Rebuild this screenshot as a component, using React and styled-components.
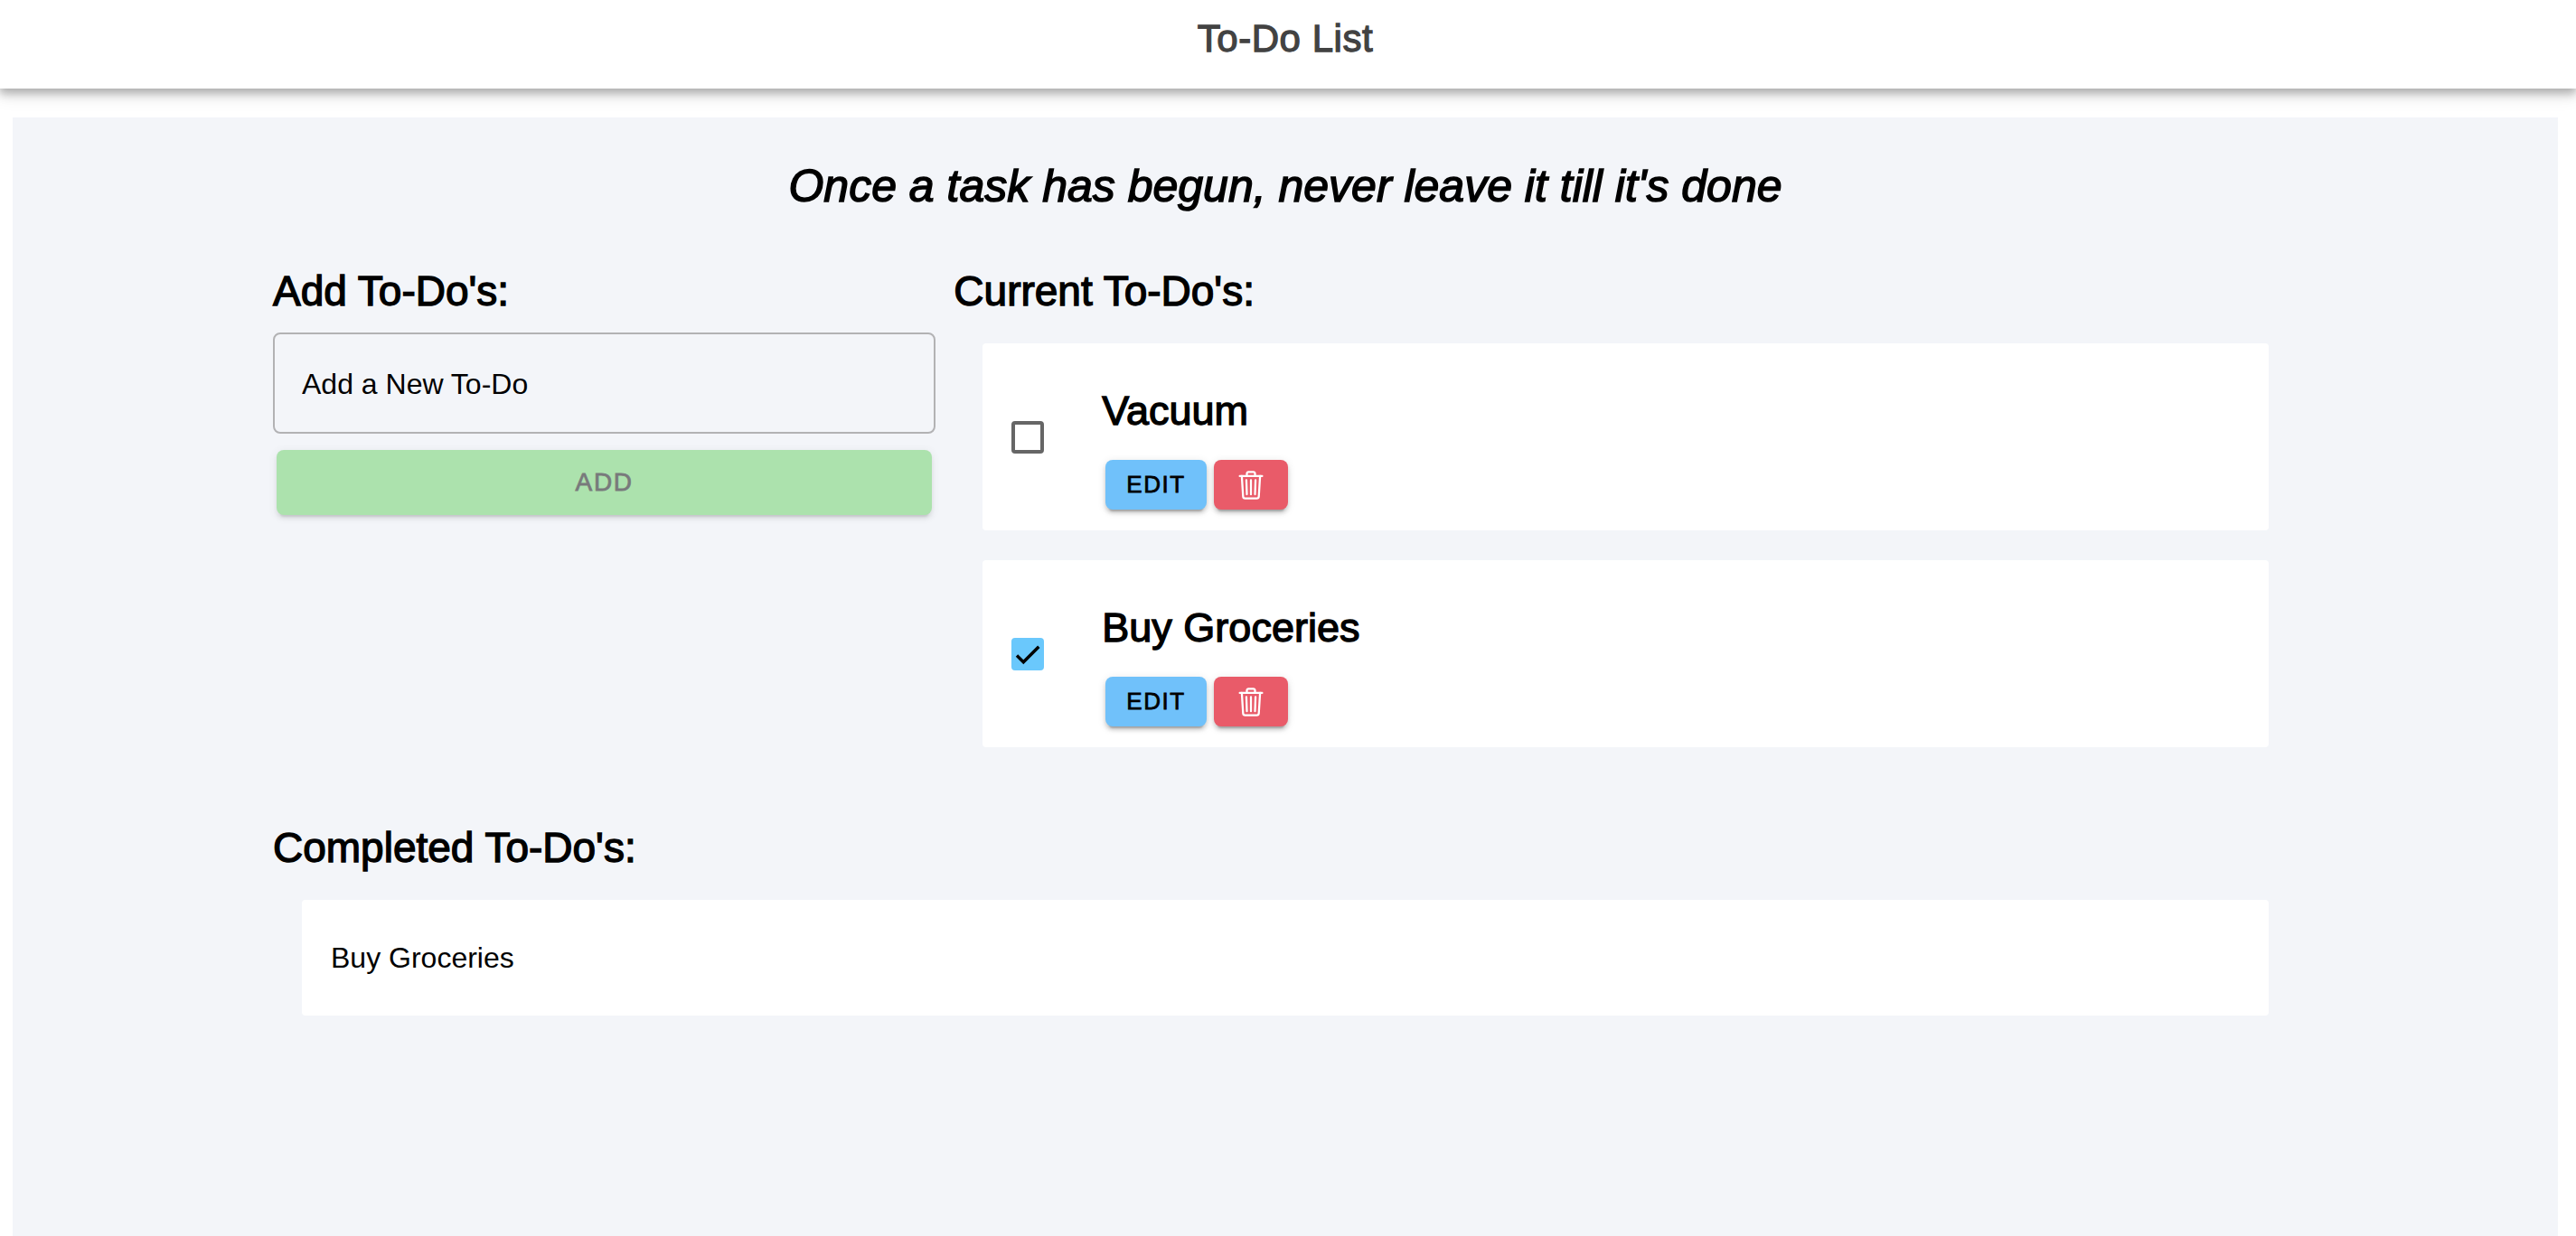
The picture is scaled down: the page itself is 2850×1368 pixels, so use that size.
import React, { useState } from "react";
import styled, { createGlobalStyle, css } from "styled-components";

const GlobalStyle = createGlobalStyle`
  *, *::before, *::after { box-sizing: border-box; }
  body {
    margin: 0;
    background: #fff;
    color: #000;
    font-family: "Liberation Sans", Arial, sans-serif;
    font-size: 32px;
  }
  h1, h2, h3, p, ul { margin: 0; padding: 0; font-weight: 400; }
  ul { list-style: none; }
`;

/* A medium weight, between the family's regular and bold. */
const mediumWeight = css`
  -webkit-text-stroke: 0.03em currentColor;
`;

const Page = styled.div`
  min-height: 100vh;
  display: flex;
  flex-direction: column;
  overflow-x: hidden;
`;

const Header = styled.header`
  height: 98px;
  padding-bottom: 12px;
  display: flex;
  align-items: center;
  justify-content: center;
  background: #fff;
  box-shadow: 0 4px 8px 0 rgba(0, 0, 0, 0.16), 0 8px 10px 0 rgba(0, 0, 0, 0.12),
    0 2px 20px 4px rgba(0, 0, 0, 0.1);
`;

const AppTitle = styled.h1`
  padding-right: 6px;
  font-size: 42px;
  line-height: 48px;
  letter-spacing: 0.0125em;
  color: #424242;
  ${mediumWeight}
`;

const Panel = styled.main`
  flex: 1;
  margin: 32px 20px 0 14px;
  padding-top: 48px;
  background: #f3f5f9;
`;

const Motto = styled.p`
  font-size: 50px;
  line-height: 56px;
  font-style: italic;
  text-align: center;
  ${mediumWeight}
`;

const Board = styled.div`
  width: 80vw;
  margin: 34px auto 0;
  padding: 0 10px;
  display: grid;
  grid-template-columns: minmax(0, 1fr) minmax(0, 2fr);
  row-gap: 57px;
`;

const Section = styled.section`
  grid-column: ${(p) => (p.$wide ? "1 / -1" : "auto")};
  padding: 0 10px;
`;

const Heading = styled.h2`
  padding: 28px 0 20px;
  font-size: 46px;
  line-height: 52px;
  ${mediumWeight}
`;

const TodoForm = styled.form`
  display: flex;
  flex-direction: column;
`;

const TextField = styled.input`
  width: 100%;
  height: 112px;
  padding: 2px 30px 0;
  border: 2px solid #b2b2b4;
  border-radius: 8px;
  background: transparent;
  color: #000;
  font: inherit;
  &::placeholder { color: #000; opacity: 1; }
`;

const tones = { add: "#68d064", edit: "#70c1fa", remove: "#e95b69" };

const Button = styled.button`
  height: ${(p) => (p.$small ? 55 : 72)}px;
  padding: 0 23px;
  display: inline-flex;
  align-items: center;
  justify-content: center;
  border: 0;
  border-radius: 8px;
  background: ${(p) => tones[p.$tone]};
  color: #000;
  font-family: inherit;
  font-size: ${(p) => (p.$small ? 26 : 28)}px;
  letter-spacing: 0.06em;
  ${mediumWeight}
  box-shadow: 0 6px 2px -4px rgba(0, 0, 0, 0.2), 0 4px 4px 0 rgba(0, 0, 0, 0.14),
    0 2px 10px 0 rgba(0, 0, 0, 0.12);
  &:disabled { opacity: 0.5; }
`;

const AddButton = styled(Button)`
  margin: 18px 4px 0;
`;

const CardList = styled.ul`
  display: flex;
  flex-direction: column;
  gap: 33px;
  padding: 12px 32px 0;
`;

const Card = styled.li`
  display: flex;
  align-items: center;
  gap: 64px;
  padding: 49px 32px 23px;
  border-radius: 4px;
  background: #fff;
`;

const DoneCard = styled.li`
  padding: 44px 32px;
  border-radius: 4px;
  background: #fff;
  line-height: 40px;
`;

const CheckLabel = styled.label`
  display: grid;
  margin-top: -25px;
`;

const Checkbox = styled.input`
  grid-area: 1 / 1;
  appearance: none;
  width: 36px;
  height: 36px;
  margin: 0;
  border: 4px solid #666;
  border-radius: 4px;
  background: #fff;
  &:checked { border-color: #6ac8fc; background: #6ac8fc; }
`;

const CheckMark = styled.svg`
  grid-area: 1 / 1;
  width: 36px;
  height: 36px;
  pointer-events: none;
`;

const CardTitle = styled.h3`
  font-size: 45px;
  line-height: 52px;
  ${mediumWeight}
`;

const Actions = styled.div`
  display: flex;
  gap: 8px;
  padding: 28px 4px 0;
`;

const TrashSvg = styled.svg`
  width: 36px;
  height: 36px;
  fill: none;
  stroke: #fff;
  stroke-width: 32px;
  stroke-linecap: round;
  stroke-linejoin: round;
`;

function TrashIcon() {
  return (
    <TrashSvg viewBox="0 0 512 512" aria-hidden="true">
      <path d="M112 112l20 320c.95 18.49 14.4 32 32 32h184c17.67 0 30.87-13.51 32-32l20-320" />
      <path d="M80 112h352" />
      <path d="M192 112V72a23.93 23.93 0 0124-24h80a23.93 23.93 0 0124 24v40M256 176v224M184 176l8 224M328 176l-8 224" />
    </TrashSvg>
  );
}

function TodoCard({ todo, onToggle, onRemove }) {
  return (
    <Card>
      <CheckLabel>
        <Checkbox
          type="checkbox"
          aria-label={todo.title}
          checked={todo.done}
          onChange={() => onToggle(todo.id)}
        />
        {todo.done && (
          <CheckMark viewBox="0 0 36 36" aria-hidden="true">
            <path d="M6 19.5l7.3 7.3L30.3 9.8" fill="none" stroke="#000" strokeWidth="3.4" />
          </CheckMark>
        )}
      </CheckLabel>
      <div>
        <CardTitle>{todo.title}</CardTitle>
        <Actions>
          <Button type="button" $tone="edit" $small>EDIT</Button>
          <Button
            type="button"
            $tone="remove"
            $small
            aria-label="Delete"
            onClick={() => onRemove(todo.id)}
          >
            <TrashIcon />
          </Button>
        </Actions>
      </div>
    </Card>
  );
}

export default function App() {
  const [draft, setDraft] = useState("");
  const [todos, setTodos] = useState([
    { id: 1, title: "Vacuum", done: false },
    { id: 2, title: "Buy Groceries", done: true },
  ]);

  const addTodo = (event) => {
    event.preventDefault();
    setTodos([...todos, { id: Date.now(), title: draft, done: false }]);
    setDraft("");
  };
  const toggle = (id) =>
    setTodos(todos.map((t) => (t.id === id ? { ...t, done: !t.done } : t)));
  const remove = (id) => setTodos(todos.filter((t) => t.id !== id));

  return (
    <Page>
      <GlobalStyle />
      <Header>
        <AppTitle>To-Do List</AppTitle>
      </Header>
      <Panel>
        <Motto>Once a task has begun, never leave it till it's done</Motto>
        <Board>
          <Section>
            <Heading>Add To-Do's:</Heading>
            <TodoForm onSubmit={addTodo}>
              <TextField
                type="text"
                aria-label="Add a New To-Do"
                placeholder="Add a New To-Do"
                value={draft}
                onChange={(e) => setDraft(e.target.value)}
              />
              <AddButton type="submit" $tone="add" disabled={!draft}>ADD</AddButton>
            </TodoForm>
          </Section>
          <Section>
            <Heading>Current To-Do's:</Heading>
            <CardList>
              {todos.map((t) => (
                <TodoCard key={t.id} todo={t} onToggle={toggle} onRemove={remove} />
              ))}
            </CardList>
          </Section>
          <Section $wide>
            <Heading>Completed To-Do's:</Heading>
            <CardList>
              {todos.filter((t) => t.done).map((t) => (
                <DoneCard key={t.id}>{t.title}</DoneCard>
              ))}
            </CardList>
          </Section>
        </Board>
      </Panel>
    </Page>
  );
}
